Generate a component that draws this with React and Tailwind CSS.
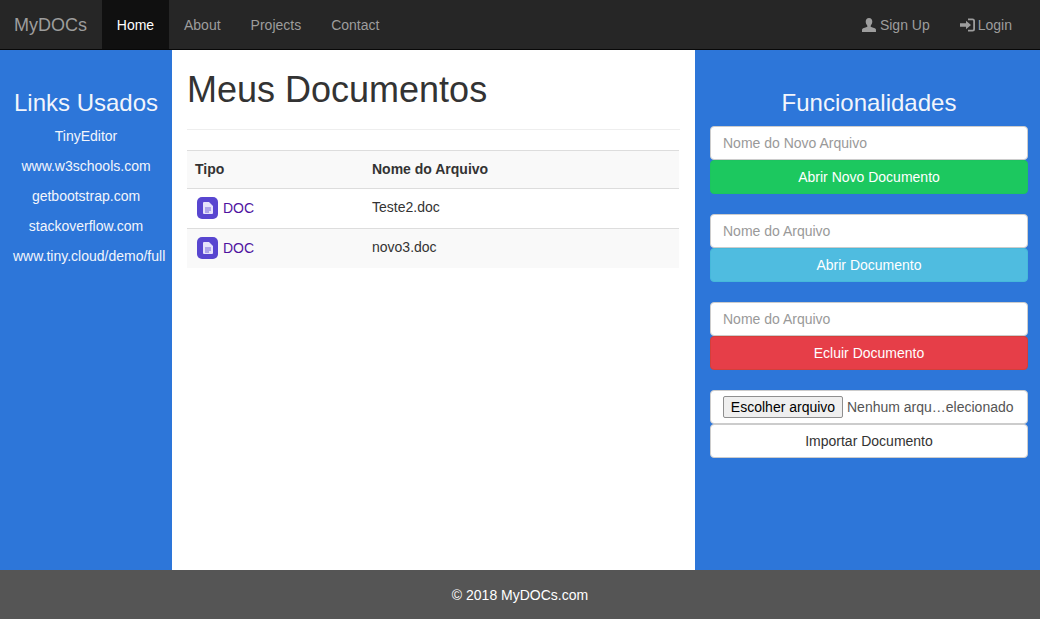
const font = { sans: 'font-["Liberation_Sans",Arial,sans-serif]' };

const links = ['TinyEditor', 'www.w3schools.com', 'getbootstrap.com', 'stackoverflow.com', 'www.tiny.cloud/demo/full'];

function UserIcon() {
  return (
    <svg width="14" height="14" viewBox="0 0 14 14" fill="currentColor">
      <path d="M7 0C4.9 0 3.7 1.5 3.7 3.6c0 1.5.6 3 1.5 3.9.3.4.3.9 0 1.2-.9.8-4.2 1-5 2.4-.2.4-.2 1.6-.2 2.9h14c0-1.300 0-2.500-.2-2.900-.8-1.400-4.100-1.600-5-2.400-.3-.3-.3-.8 0-1.200.9-.9 1.500-2.400 1.500-3.900C10.300 1.500 9.100 0 7 0z" />
    </svg>
  );
}

function LoginIcon() {
  return (
    <svg width="15" height="14" viewBox="0 0 15 14" fill="currentColor">
      <path d="M6 2.800 11 7l-5 4.200V8.700H0V5.300h6z" />
      <path d="M8 .5h4.500A2.500 2.500 0 0 1 15 3v8a2.500 2.500 0 0 1-2.500 2.500H8v-1.800h4.200c.7 0 1-.4 1-1V3.300c0-.6-.3-1-1-1H8z" />
    </svg>
  );
}

function DocIcon() {
  return (
    <span className="flex h-[22px] w-[21px] items-center justify-center rounded-[5px] bg-[#5846d0]">
      <svg width="10" height="12" viewBox="0 0 10 12">
        <path d="M0 1a1 1 0 0 1 1-1h5l4 4v7a1 1 0 0 1-1 1H1a1 1 0 0 1-1-1z" fill="#e6e3fa" />
        <path d="M2 6h6M2 8h6M2 10h4" stroke="#5846d0" strokeWidth="0.8" />
      </svg>
    </span>
  );
}

function Field({ placeholder }) {
  return (
    <input
      placeholder={placeholder}
      className="block h-[34px] w-full rounded border border-[#ccc] bg-white px-3 text-sm text-[#555] placeholder:text-[#999]"
    />
  );
}

function ActionGroup({ placeholder, label, color }) {
  return (
    <div className="mb-5">
      <Field placeholder={placeholder} />
      <button className={`block h-[34px] w-full rounded border text-center text-sm text-white ${color}`}>{label}</button>
    </div>
  );
}

export default function App() {
  return (
    <div className={`flex h-[619px] flex-col overflow-hidden bg-white text-sm text-[#333] ${font.sans}`}>
      {/* Navbar */}
      <nav className="flex h-[50px] shrink-0 items-stretch border-b border-[#080808] bg-[#262626] text-[#9d9d9d]">
        <a className="flex w-[102px] items-center pl-[14px] text-lg">MyDOCs</a>
        <a className="flex w-[67px] items-center justify-center bg-[#101010] text-white">Home</a>
        <a className="flex items-center px-[15px]">About</a>
        <a className="flex items-center px-[15px]">Projects</a>
        <a className="flex items-center px-[15px]">Contact</a>
        <div className="ml-auto mr-[13px] flex">
          <a className="flex items-center gap-1 px-[15px]"><UserIcon /> Sign Up</a>
          <a className="flex items-center gap-[3px] px-[15px]"><LoginIcon /> Login</a>
        </div>
      </nav>

      <div className="flex min-h-0 flex-1">
        {/* Left links */}
        <aside className="w-[172px] shrink-0 whitespace-nowrap bg-[#2d76d9] px-[13px] pt-[40px] text-center text-[#f2f5fc]">
          <h3 className="mb-[10px] mt-0 text-2xl leading-[26px]">Links Usados</h3>
          {links.map(link => (
            <p key={link} className="mb-[10px] leading-5">{link}</p>
          ))}
        </aside>

        {/* Documents */}
        <main className="flex-1 pl-[15px] pr-[15px] pt-5">
          <div className="mb-5 border-b border-[#eee] pb-[9px]">
            <h1 className="mb-[10px] text-4xl leading-[39.6px] font-normal">Meus Documentos</h1>
          </div>
          <table className="w-[492px] table-fixed border-collapse text-left">
            <thead>
              <tr className="h-[38px] border-y border-[#ddd] bg-[#f9f9f9]">
                <th className="w-[177px] px-2 font-bold">Tipo</th>
                <th className="px-2 font-bold">Nome do Arquivo</th>
              </tr>
            </thead>
            <tbody>
              {['Teste2.doc', 'novo3.doc'].map((name, i) => (
                <tr key={name} className={`h-[40px] ${i % 2 ? 'border-t border-[#ddd] bg-[#f9f9f9]' : ''}`}>
                  <td className="px-[10px]">
                    <a className="flex items-center gap-[5px] text-[#4f129f]"><DocIcon /> DOC</a>
                  </td>
                  <td className="px-2 pb-[3px]">{name}</td>
                </tr>
              ))}
            </tbody>
          </table>
        </main>

        {/* Actions */}
        <aside className="w-[345px] shrink-0 bg-[#2d76d9] pl-[15px] pr-3 pt-[40px]">
          <h3 className="mb-[10px] text-center text-2xl leading-[26px] text-[#f2f5fc]">Funcionalidades</h3>
          <ActionGroup placeholder="Nome do Novo Arquivo" label="Abrir Novo Documento" color="border-[#1cc45f] bg-[#1cc85f]" />
          <ActionGroup placeholder="Nome do Arquivo" label="Abrir Documento" color="border-[#46b8da] bg-[#4fbce0]" />
          <ActionGroup placeholder="Nome do Arquivo" label="Ecluir Documento" color="border-[#d43f3a] bg-[#e63e48]" />
          <div className="flex h-[34px] items-center rounded border border-[#ccc] bg-white pl-3 text-[#555]">
            <button className="h-[22px] w-[120px] rounded-[2px] border border-[#8f8f8f] bg-[#efefef] text-center text-sm text-black">Escolher arquivo</button>
            <span className="ml-1 whitespace-nowrap">Nenhum arqu…elecionado</span>
          </div>
          <button className="block h-[34px] w-full rounded border border-[#ccc] bg-white text-center text-sm text-[#333]">Importar Documento</button>
        </aside>
      </div>

      {/* Footer */}
      <footer className="flex h-[49px] shrink-0 items-center justify-center bg-[#555] text-white">© 2018 MyDOCs.com</footer>
    </div>
  );
}
